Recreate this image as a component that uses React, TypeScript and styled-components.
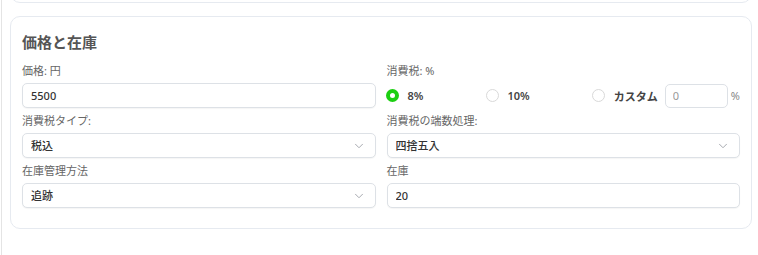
import { useState } from "react";
import styled, { createGlobalStyle } from "styled-components";
import { ChevronDown } from "lucide-react";

const GlobalStyle = createGlobalStyle`
  html, body {
    margin: 0;
    padding: 0;
    background: #ffffff;
  }

  body {
    font-family: "Noto Sans", "Noto Sans CJK JP", sans-serif;
    color: #333;
    overflow: hidden;
  }

  * {
    box-sizing: border-box;
  }
`;

const TAX_RATES = [
  { value: "8", label: "8%" },
  { value: "10", label: "10%" },
];

function App() {
  const [rate, setRate] = useState("8");
  const [price, setPrice] = useState("5500");
  const [stock, setStock] = useState("20");
  const [custom, setCustom] = useState("");

  return (
    <Shell>
      <GlobalStyle />
      <PreviousCard />

      <Card>
        <Title>価格と在庫</Title>

        <FieldGrid>
          <Field>
            <Label>価格: 円</Label>
            <TextInput value={price} onChange={(e) => setPrice(e.target.value)} />
          </Field>

          <Field>
            <Label>消費税: %</Label>
            <RadioRow>
              {TAX_RATES.map((r) => (
                <RadioOption key={r.value}>
                  <Radio
                    type="radio"
                    name="tax"
                    checked={rate === r.value}
                    onChange={() => setRate(r.value)}
                  />
                  {r.label}
                </RadioOption>
              ))}

              <RadioOption>
                <Radio
                  type="radio"
                  name="tax"
                  checked={rate === "custom"}
                  onChange={() => setRate("custom")}
                />
                カスタム
                <CustomInput
                  placeholder="0"
                  value={custom}
                  onChange={(e) => setCustom(e.target.value)}
                />
                <Unit>%</Unit>
              </RadioOption>
            </RadioRow>
          </Field>

          <Field>
            <Label>消費税タイプ:</Label>
            <SelectBox>
              <Select defaultValue="incl">
                <option value="incl">税込</option>
                <option value="excl">税抜</option>
              </Select>
              <ChevronDown size={14} strokeWidth={1.6} />
            </SelectBox>
          </Field>

          <Field>
            <Label>消費税の端数処理:</Label>
            <SelectBox>
              <Select defaultValue="round">
                <option value="round">四捨五入</option>
                <option value="floor">切り捨て</option>
                <option value="ceil">切り上げ</option>
              </Select>
              <ChevronDown size={14} strokeWidth={1.6} />
            </SelectBox>
          </Field>

          <Field>
            <Label>在庫管理方法</Label>
            <SelectBox>
              <Select defaultValue="track">
                <option value="track">追跡</option>
                <option value="none">追跡しない</option>
              </Select>
              <ChevronDown size={14} strokeWidth={1.6} />
            </SelectBox>
          </Field>

          <Field>
            <Label>在庫</Label>
            <TextInput value={stock} onChange={(e) => setStock(e.target.value)} />
          </Field>
        </FieldGrid>
      </Card>
    </Shell>
  );
}

const Shell = styled.main`
  display: flow-root;
  margin-left: 1px;
  border-left: 1px solid #e4e4e4;
  height: 100vh;
  overflow: hidden;
  padding: 0 6px 0 8px;
`;

const PreviousCard = styled.div`
  height: 43px;
  margin-top: -40px;
  border: 1px solid #e6eaf0;
  border-radius: 10px;
`;

const Card = styled.section`
  margin-top: 13px;
  border: 1px solid #e6eaf0;
  border-radius: 10px;
  padding: 14px 11px 20px 11px;
`;

const Title = styled.h2`
  margin: 0 0 11px;
  font-size: 15px;
  line-height: 22px;
  font-weight: 700;
  color: #555;
`;

const FieldGrid = styled.div`
  display: grid;
  grid-template-columns: 1fr 1fr;
  column-gap: 11px;
  row-gap: 6px;
`;

const Field = styled.div`
  display: flex;
  flex-direction: column;
`;

const Label = styled.label`
  font-size: 11px;
  line-height: 14px;
  color: #666;
  margin-bottom: 5px;
`;

const TextInput = styled.input`
  height: 25px;
  width: 100%;
  border: 1px solid #dde1e6;
  border-radius: 5px;
  box-shadow: 0 1px 1px rgba(0, 0, 0, 0.04);
  padding: 0 8px;
  font-family: inherit;
  font-size: 11px;
  font-weight: 500;
  color: #333;
  outline: none;
`;

const RadioRow = styled.div`
  height: 25px;
  display: flex;
  align-items: center;
  justify-content: space-between;
`;

const RadioOption = styled.label`
  display: flex;
  align-items: center;
  gap: 9px;
  font-size: 11px;
  font-weight: 600;
  color: #444;
`;

const Radio = styled.input`
  appearance: none;
  margin: 0 0 0 -1px;
  width: 13px;
  height: 13px;
  border-radius: 50%;
  border: 1px solid #d9d9d9;
  background: #fff;

  &:checked {
    border: 4px solid #1ccf12;
  }
`;

const CustomInput = styled.input`
  width: 63px;
  height: 24px;
  margin-left: -2px;
  border: 1px solid #dde1e6;
  border-radius: 5px;
  padding: 0 7px;
  font-family: inherit;
  font-size: 11px;
  color: #333;
  outline: none;

  &::placeholder {
    color: #999;
  }
`;

const Unit = styled.span`
  margin-left: -6px;
  font-weight: 400;
  color: #888;
`;

const SelectBox = styled.div`
  position: relative;

  svg {
    position: absolute;
    right: 10px;
    top: 50%;
    transform: translateY(-50%);
    color: #a0a4aa;
    pointer-events: none;
  }
`;

const Select = styled.select`
  appearance: none;
  width: 100%;
  height: 25px;
  border: 1px solid #dde1e6;
  border-radius: 5px;
  box-shadow: 0 1px 1px rgba(0, 0, 0, 0.04);
  background: #fff;
  padding: 0 8px;
  font-family: inherit;
  font-size: 11px;
  font-weight: 500;
  color: #333;
  outline: none;
`;

export default App;
